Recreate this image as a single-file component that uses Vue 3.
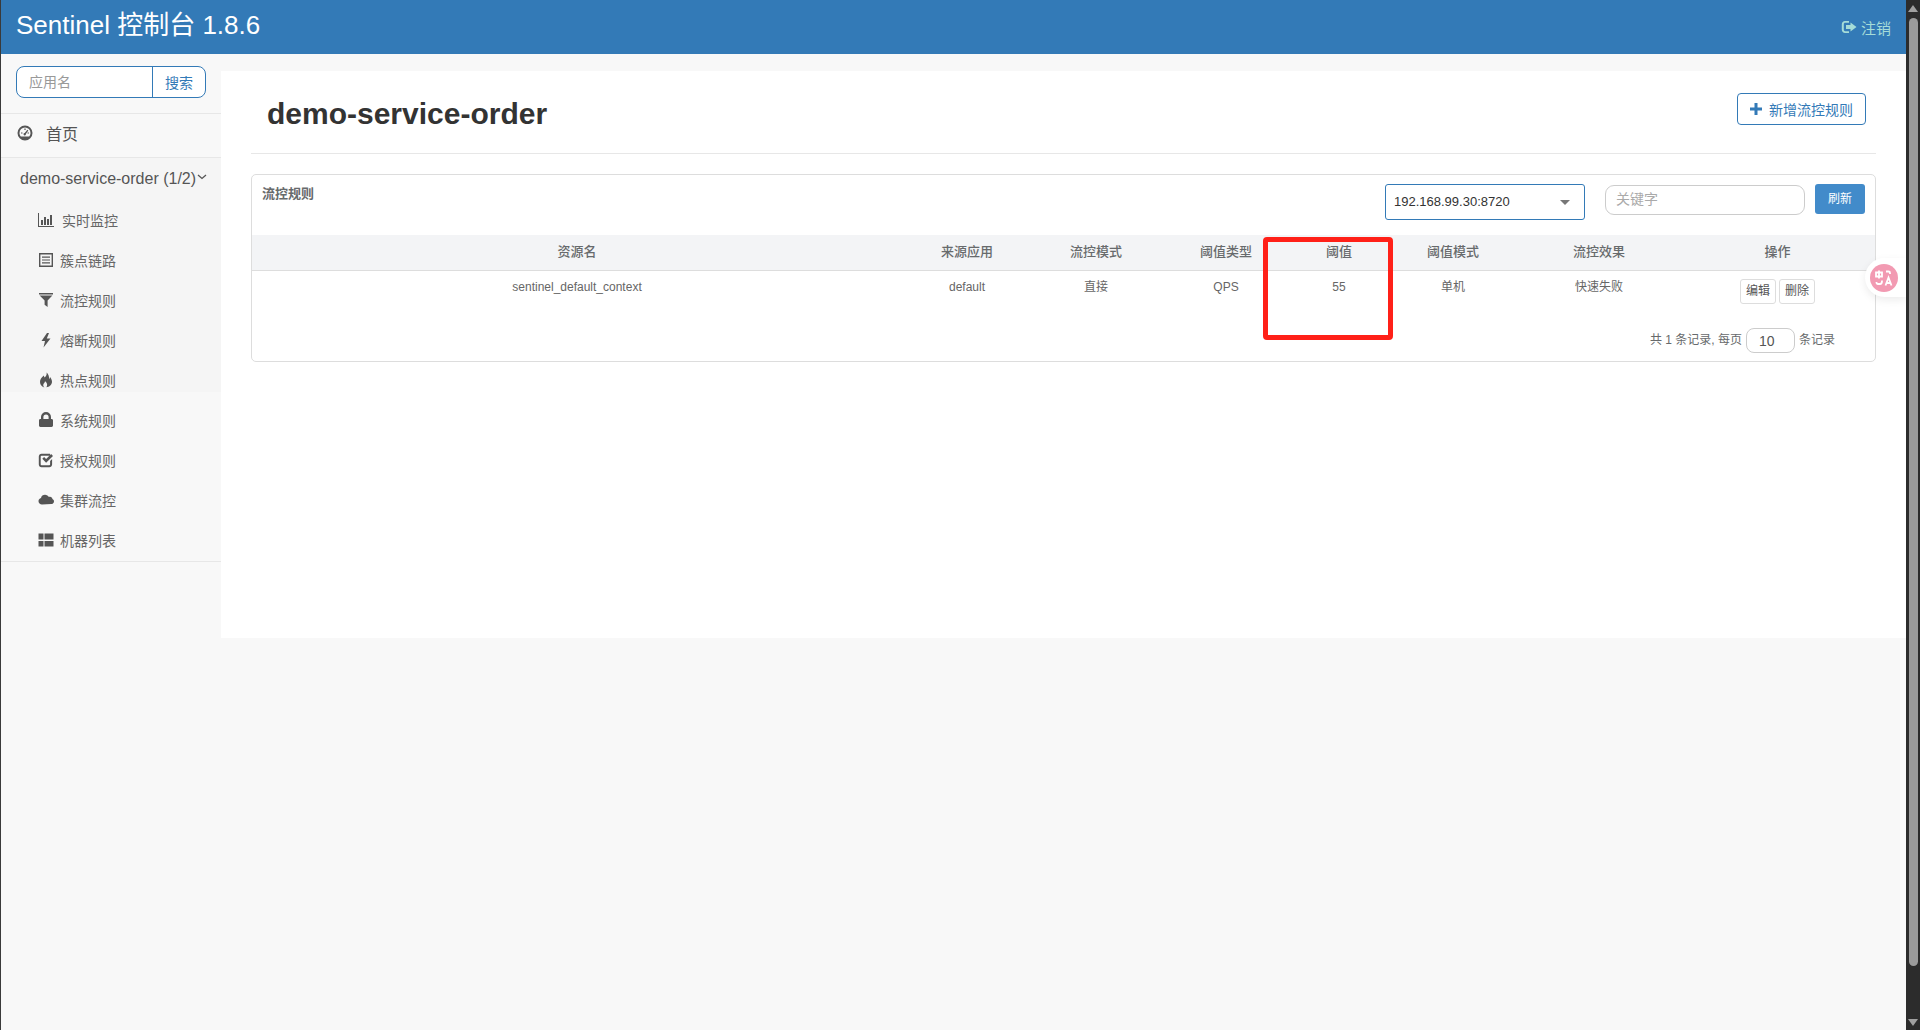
<script setup>
const groupTop = [
  { label: '实时监控', cls: 'shift', d: 'M0 1h1v13h15v1H0z M3 8h2v5H3z M6 5h2v8H6z M9 7h2v6H9z M12 3h2v10h-2z' },
  { label: '簇点链路', d: 'M1 1h14v14H1z M2.4 2.4v11.2h11.2V2.4z M4 4.5h8v1.2H4z M4 7.4h8v1.2H4z M4 10.3h8v1.2H4z' },
  { label: '流控规则', d: 'M1 1h14v1.4H1z M1.6 3.4h12.8L9.6 8.4V15l-3-2.2V8.4z' },
  { label: '熔断规则', d: 'M9 1L3.500 9H7L5.500 15.500L12.500 6.500H8.800L11 1z' },
  { label: '热点规则', d: 'M8.5 0.5c.8 2.4-.6 3.6-1.8 5-.6-.6-.8-1.2-.8-2C3.4 5.4 2 7.6 2 10c0 2.8 2 5 4.4 5.4-1-1-1.4-2-1-3.2.4-1 1.4-1.6 1.6-3 1.4 1 2.6 2.6 2 4.6-.1.5-.4 1-.7 1.5C11.400 15 14 12.800 14 9.800c0-2-.9-3.500-2-4.800 0 .9-.3 1.500-.9 2C11.300 4.500 10.500 2 8.500.5z' }
]
const groupRest = [
  { label: '系统规则', d: 'M3 7V5a5 5 0 0 1 10 0v2h.6c.8 0 1.400.6 1.400 1.400v5.200c0 .8-.6 1.400-1.400 1.400H2.400C1.600 15 1 14.400 1 13.600V8.400C1 7.600 1.600 7 2.400 7z M5.400 7h5.200V5a2.600 2.600 0 0 0-5.200 0z' },
  { label: '授权规则', d: 'M3.500 1.800H12v2H3.500c-.5 0-.8.3-.8.8v7.800c0 .5.300.8.8.8h7.800c.5 0 .8-.3.8-.8V9l2-2v5.400c0 1.500-1.300 2.800-2.800 2.800H3.500C2 15.200.8 13.900.8 12.400V4.600C.8 3.100 2 1.800 3.500 1.800z M4.300 6.800l1.800-1.700 2 2 5-5L15 3.900 8.100 10.800z' },
  { label: '集群流控', d: 'M4 12.500C2 12.500 0.500 11 0.500 9.200c0-1.500 1-2.800 2.500-3.200C3.400 4 5 2.800 7 2.800c1.700 0 3.100.9 3.800 2.300.4-.2.800-.3 1.200-.3 1.300 0 2.300 1 2.400 2.200 1 .4 1.600 1.300 1.600 2.400 0 1.500-1.300 2.600-2.800 2.600z' },
  { label: '机器列表', d: 'M0.500 1.500H5.500v6H0.500z M6.500 1.500h9v6h-9z M0.500 9H5.500V14.500H0.500z M6.500 9h9V14.500h-9z' }
]
const headers = ['资源名', '来源应用', '流控模式', '阈值类型', '阈值', '阈值模式', '流控效果', '操作']
const row = ['sentinel_default_context', 'default', '直接', 'QPS', '55', '单机', '快速失败']
</script>

<template>
  <div class="page">
    <div class="viewport">
      <header class="topbar">
        <span class="brand">Sentinel 控制台 1.8.6</span>
        <span class="logout">
          <svg class="logout-icon" viewBox="0 0 16 16"><path fill-rule="evenodd" d="M4 2h4v1.800H4.200c-.8 0-1.400.6-1.400 1.400v5.600c0 .8.6 1.400 1.400 1.400H8V14H4c-1.800 0-3.200-1.400-3.200-3.200V5.200C.8 3.400 2.200 2 4 2z M9.500 3.500L15.500 8l-6 4.500V10H5V6h4.500z" /></svg>
          注销
        </span>
      </header>

      <div class="body-row">
        <aside class="sidebar">
          <div class="search">
            <span class="search-input">应用名</span>
            <span class="search-btn">搜索</span>
          </div>
          <div class="home">
            <svg class="home-icon" viewBox="0 0 16 16"><path fill-rule="evenodd" d="M8 0.500a7.500 7.500 0 1 1 0 15 7.500 7.500 0 0 1 0-15z M8 2.500a5.500 5.500 0 0 0-5.500 5.500c0 1.300.5 2.500 1.300 3.500h8.400c.8-1 1.300-2.200 1.300-3.500A5.500 5.500 0 0 0 8 2.500z M7.400 3.500h1.200v1.500H7.400z M4 7.400h1.500v1.200H4z M10.500 7.400H12v1.200h-1.500z M10.400 4.700l.9.8L8.900 9A1.200 1.200 0 1 1 7.700 8z" /></svg>
            <span>首页</span>
          </div>
          <div class="app-group">
            <div class="app-title">
              <span>demo-service-order (1/2)</span>
              <svg class="chevron" viewBox="0 0 10 6"><path d="M1 1l4 3.500L9 1" /></svg>
            </div>
            <div v-for="item in groupTop" :key="item.label" class="nav-item" :class="item.cls">
              <svg class="nav-icon" viewBox="0 0 16 16"><path fill-rule="evenodd" :d="item.d" /></svg>
              <span>{{ item.label }}</span>
            </div>
          </div>
          <div class="rest-group">
            <div v-for="item in groupRest" :key="item.label" class="nav-item">
              <svg class="nav-icon" viewBox="0 0 16 16"><path fill-rule="evenodd" :d="item.d" /></svg>
              <span>{{ item.label }}</span>
            </div>
          </div>
        </aside>

        <main class="content">
          <section class="card">
            <div class="title-row">
              <h1>demo-service-order</h1>
              <span class="add-btn">
                <svg class="plus" viewBox="0 0 12 12"><path d="M4.500 0h3v4.500H12v3H7.500V12h-3V7.500H0v-3h4.500z" /></svg>
                新增流控规则
              </span>
            </div>
            <div class="panel">
              <div class="panel-head">
                <span class="panel-title">流控规则</span>
                <span class="select">192.168.99.30:8720<i class="caret"></i></span>
                <span class="keyword">关键字</span>
                <span class="refresh">刷新</span>
              </div>
              <div class="grid head-row">
                <span v-for="h in headers" :key="h">{{ h }}</span>
              </div>
              <div class="grid data-row">
                <span v-for="c in row" :key="c">{{ c }}</span>
                <span class="ops"><b>编辑</b><b>删除</b></span>
              </div>
              <div class="pager">
                <span class="pager-text">共 1 条记录, 每页</span>
                <span class="page-size">10</span>
                <span class="pager-text">条记录</span>
              </div>
              <div class="highlight"></div>
            </div>
          </section>
        </main>
      </div>

      <div class="translate">
        <span class="translate-dot">
          <svg viewBox="0 0 28 28"><path d="M12 8.500h-6v4h6z M9 6.500v8 M16 7.500h2.500c1 0 1.500.5 1.500 1.500v1 M12 16.500v.5c0 2-.5 3-2 3H8c-1 0-1.500-.5-1.500-1.500V18 M15.500 21.500l3-8 3 8 M16.700 19h3.600" /></svg>
        </span>
      </div>
    </div>

    <div class="scrollbar">
      <i class="arrow up"></i>
      <div class="thumb"></div>
      <i class="arrow down"></i>
    </div>
  </div>
</template>

<style>
html, body { margin: 0; height: 100%; overflow: hidden; background: #f8f8f8; }
</style>

<style scoped>
.page {
  display: flex;
  height: 1030px;
  border-left: 1px solid #3a3a3a;
  box-sizing: border-box;
  font-family: "Liberation Sans", "Noto Sans CJK SC", sans-serif;
  color: #676a6c;
  font-size: 12px;
  background: #f8f8f8;
}
.viewport { position: relative; flex: 1; min-width: 0; }
.topbar {
  height: 54px;
  background: #337ab7;
  display: flex;
  align-items: center;
  justify-content: space-between;
  padding: 0 15px;
}
.brand { color: #fff; font-size: 26px; line-height: 50px; height: 50px; margin-top: -4px; }
.logout { color: #a5dcd8; font-size: 15px; display: flex; align-items: center; gap: 4px; margin-top: 0; }
.logout-icon { width: 16px; height: 16px; fill: currentColor; }
.body-row { display: flex; }
.sidebar { width: 220px; flex: none; }
.search { display: flex; margin: 12px 15px 0; height: 32px; box-sizing: border-box; border: 1px solid #337ab7; border-radius: 8px; background: #fff; overflow: hidden; }
.search-input { flex: 1; padding-left: 12px; line-height: 30px; font-size: 14px; color: #999; }
.search-btn { width: 52px; border-left: 1px solid #337ab7; text-align: center; line-height: 32px; font-size: 14px; color: #337ab7; }
.home { margin-top: 15px; height: 45px; box-sizing: border-box; padding-bottom: 5px; display: flex; align-items: center; border-top: 1px solid #e7e7e7; border-bottom: 1px solid #e7e7e7; padding-left: 16px; font-size: 16px; color: #555; gap: 13px; }
.home-icon { width: 16px; height: 16px; fill: #555; margin-top: -1px; }
.app-group { background: #f5f5f5; height: 234px; box-sizing: border-box; }
.app-title { height: 42px; display: flex; align-items: center; padding-left: 19px; font-size: 16px; color: #555; gap: 1px; }
.chevron { width: 10px; height: 6px; fill: none; stroke: #555; stroke-width: 1.300; margin-top: -5px; }
.nav-item { height: 40px; display: flex; align-items: center; padding-left: 37px; font-size: 14px; color: #666; gap: 6px; }
.nav-item.shift { gap: 8px; }
.nav-icon { width: 16px; height: 16px; fill: #555; flex: none; }
.rest-group { height: 170px; padding-top: 8px; box-sizing: border-box; border-bottom: 1px solid #e7e7e7; }
.content { flex: 1; min-width: 0; padding-top: 17px; }
.card { background: #fff; height: 567px; box-sizing: border-box; padding: 0 30px; }
.title-row { height: 83px; box-sizing: border-box; display: flex; align-items: flex-start; justify-content: space-between; border-bottom: 1px solid #e7e7e7; margin-bottom: 20px; }
h1 { margin: 25px 0 0 16px; font-size: 30px; line-height: 36px; font-weight: 700; color: #333; }
.add-btn { margin: 22px 10px 0 0; width: 129px; height: 32px; box-sizing: border-box; border: 1px solid #337ab7; border-radius: 4px; color: #337ab7; font-size: 14px; display: flex; align-items: center; justify-content: center; gap: 7px; }
.plus { width: 12px; height: 12px; fill: #337ab7; }
.panel { position: relative; height: 188px; box-sizing: border-box; border: 1px solid #ddd; border-radius: 5px; background: #fff; }
.panel-head { height: 60px; display: flex; align-items: flex-start; padding: 10px 10px 0 10px; box-sizing: border-box; }
.panel-title { flex: 1; font-weight: 600; font-size: 13px; line-height: 18px; }
.select { width: 200px; height: 36px; box-sizing: border-box; margin-top: -1px; border: 1px solid #337ab7; border-radius: 3px; padding-left: 8px; line-height: 33px; font-size: 13px; color: #333; position: relative; }
.caret { position: absolute; right: 14px; top: 15px; border: 5px solid transparent; border-top-color: #777; border-bottom: 0; }
.keyword { width: 200px; height: 30px; box-sizing: border-box; margin: 0 10px 0 20px; border: 1px solid #ccc; border-radius: 9px; padding-left: 10px; line-height: 27px; font-size: 14px; color: #aaa; }
.refresh { width: 50px; height: 30px; margin-top: -1px; background: #428bca; border-radius: 3px; color: #fff; text-align: center; line-height: 30px; font-size: 12px; }
.grid { display: grid; grid-template-columns: 650px 130px 128px 132px 94px 134px 158px 1fr; text-align: center; }
.head-row { height: 36px; line-height: 33px; background: #f3f4f6; border-bottom: 1px solid #ddd; box-sizing: border-box; font-size: 13px; font-weight: 500; }
.head-row span:last-child { padding-left: 2px; }
.data-row { padding-top: 7px; line-height: 18px; color: #666; }
.ops { display: flex; justify-content: center; gap: 3px; margin-top: 1px; padding-left: 2px; }
.ops b { width: 36px; height: 25px; box-sizing: border-box; border: 1px solid #ddd; border-radius: 3px; font-weight: 400; line-height: 22px; color: #555; }
.pager { position: absolute; right: 40px; top: 153px; display: flex; align-items: center; gap: 4px; font-size: 12px; }
.pager-text { margin-top: -4px; }
.page-size { width: 49px; height: 25px; box-sizing: border-box; border: 1px solid #ccc; border-radius: 8px; padding-left: 12px; line-height: 24px; font-size: 14px; color: #555; }
.highlight { position: absolute; left: 1011px; top: 62px; width: 130px; height: 103px; box-sizing: border-box; border: 5px solid #ff2018; border-radius: 4px; pointer-events: none; }
.translate { position: absolute; right: 0; top: 258px; width: 41px; height: 39px; background: #fff; border-radius: 20px 0 0 20px; box-shadow: 0 3px 8px rgba(0,0,0,.08); display: flex; align-items: center; padding-left: 5px; box-sizing: border-box; }
.translate-dot { width: 28px; height: 28px; border-radius: 50%; background: #f29ab2; display: block; }
.translate-dot svg { width: 28px; height: 28px; fill: none; stroke: #fff; stroke-width: 1.800; display: block; }
.scrollbar { width: 14px; flex: none; background: #2c2c2c; position: relative; display: flex; flex-direction: column; align-items: center; }
.arrow { position: absolute; border-left: 5px solid transparent; border-right: 5px solid transparent; }
.arrow.up { top: 5px; border-bottom: 7px solid #a0a0a0; }
.arrow.down { bottom: 4px; border-top: 7px solid #a0a0a0; }
.thumb { margin: 18px 0 0 1px; width: 9px; height: 948px; border-radius: 5px; background: #9b9b9b; }
</style>
